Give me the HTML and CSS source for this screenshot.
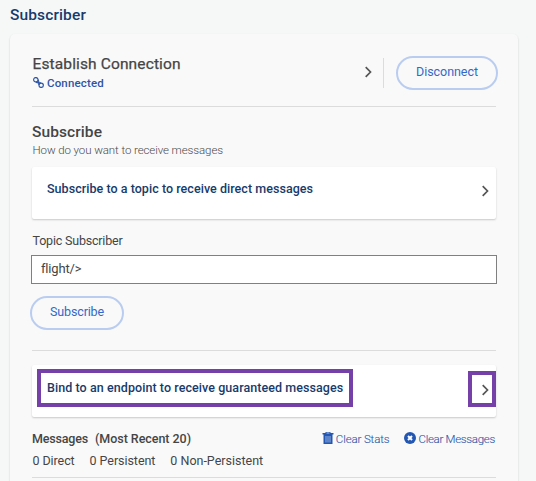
FILE: index.html
```html
<!DOCTYPE html>
<html lang="en">
<head>
<meta charset="utf-8">
<title>Subscriber</title>
<link rel="stylesheet" href="styles.css">
</head>
<body>
<h1 class="page-title">Subscriber</h1>
<main class="panel">
  <header class="connection">
    <div class="connection-info">
      <h2 class="heading establish">Establish Connection</h2>
      <div class="status">
        <svg class="link-icon" viewBox="0 0 12 12"><g fill="none" stroke="currentColor" stroke-width="1.3"><circle cx="3.1" cy="3" r="2.4"/><circle cx="8.9" cy="9" r="2.4"/><path d="M3.2 5.5C5 7 6 6 8.6 6.5M5.5 3C7 5 6 6 6.5 8.6"/></g></svg>
        <span>Connected</span>
      </div>
    </div>
    <svg class="chevron" viewBox="0 0 8 12"><path d="M1.7 1.2 6.5 6 1.7 10.8"/></svg>
    <span class="divider"></span>
    <button class="pill disconnect">Disconnect</button>
  </header>

  <section class="subscribe">
    <h2 class="heading">Subscribe</h2>
    <p class="hint">How do you want to receive messages</p>
    <div class="option">
      <span class="option-label direct">Subscribe to a topic to receive direct messages</span>
      <svg class="chevron" viewBox="0 0 8 12"><path d="M1.7 1.2 6.5 6 1.7 10.8"/></svg>
    </div>
    <label class="field-label" for="topic">Topic Subscriber</label>
    <input class="field" id="topic" value="flight/&gt;">
    <button class="pill submit">Subscribe</button>
  </section>

  <section class="guaranteed">
    <div class="option option-bind">
      <span class="option-label bind">Bind to an endpoint to receive guaranteed messages</span>
      <svg class="chevron" viewBox="0 0 8 12"><path d="M1.7 1.2 6.5 6 1.7 10.8"/></svg>
      <span class="highlight highlight-label"></span>
      <span class="highlight highlight-arrow"></span>
    </div>
    <div class="messages">
      <h3 class="messages-title"><span class="messages-word">Messages</span><span class="recent">(Most Recent 20)</span></h3>
      <a class="action stats"><svg class="trash-icon" viewBox="0 0 12 12"><path fill="currentColor" d="M3.5 0h5v1H11.5v1.6H.5V1h3zM1.5 2.6h9V12h-9z"/><path d="M4 4v6.5M6 4v6.5M8 4v6.5" stroke="#a5bbe2" stroke-width=".9"/><path d="M4.5 1h3" stroke="#f9f9f9" stroke-width=".7"/></svg><span>Clear Stats</span></a>
      <a class="action clear"><svg class="close-icon" viewBox="0 0 12 12"><circle cx="6" cy="6" r="6" fill="currentColor"/><path d="m4 4 4 4m0-4L4 8" stroke="#fff" stroke-width="2"/></svg><span>Clear Messages</span></a>
    </div>
    <div class="counts"><span class="direct-count">0 Direct</span><span class="persistent-count">0 Persistent</span><span class="other-count">0 Non-Persistent</span></div>
  </section>
</main>
</body>
</html>
```
FILE: styles.css
```css
* { box-sizing: border-box; }
body { margin: 0; height: 481px; overflow: hidden; background: #f6f8f8; color: #454545; font-family: Roboto, "Liberation Sans", sans-serif; }
h1, h2, h3, p { margin: 0; }
.page-title { height: 34px; padding: 5px 0 0 10px; font-size: 15.5px; line-height: 20px; font-weight: 500; letter-spacing: .13px; color: #173b6b; }
.panel { width: 508px; height: 470px; margin-left: 10px; padding: 0 22px; background: #f9f9f9; border-radius: 5px; box-shadow: 0 1px 2px rgba(0, 0, 0, .18); }
.connection { display: flex; height: 73px; border-bottom: 1px solid #dcdcdc; }
.connection-info { flex: 1; padding: 20px 0 0 .5px; }
.heading { font-size: 15.5px; line-height: 20px; font-weight: 500; letter-spacing: .09px; }
.establish { font-weight: 400; letter-spacing: .13px; -webkit-text-stroke: .25px currentColor; }
.status { display: flex; height: 18px; gap: 3.5px; align-items: center; font-size: 11.5px; line-height: 18px; font-weight: 500; letter-spacing: .17px; color: #2e54a6; }
.link-icon { width: 11px; height: 11px; margin-top: -2px; }
.chevron { width: 8px; height: 12px; fill: none; stroke: #555; stroke-width: 1.7; flex: none; }
.connection .chevron { margin: 32px 11px 0 0; }
.divider { width: 1px; height: 30px; margin: 24px 12px 0 0; background: #dcdcdc; }
.pill { display: block; height: 34px; padding: 0 0 2px; border: 2px solid #bacdf0; border-radius: 17px; background: transparent; color: #3268c9; font: 12.5px/16px Roboto, "Liberation Sans", sans-serif; }
.disconnect { width: 102px; margin: 22px -2px 0 0; letter-spacing: -.04px; }
.subscribe { height: 244px; padding-top: 15px; border-bottom: 1px solid #dcdcdc; }
.hint { height: 25px; padding-left: .5px; font-size: 11.5px; line-height: 16px; font-weight: 300; letter-spacing: -.09px; color: #4a4a4a; }
.option { position: relative; display: flex; width: 464px; height: 52px; padding: 0 7px 0 15px; justify-content: space-between; align-items: flex-start; background: #fff; border-radius: 2px; box-shadow: 0 1px 2px rgba(0, 0, 0, .2); }
.option .chevron { margin-top: 18px; }
.option-bind { padding-top: 1px; }
.option-label { padding-top: 14px; font-size: 12.5px; line-height: 16px; font-weight: 500; color: #173b6b; }
.direct { letter-spacing: .045px; }
.bind { letter-spacing: .07px; }
.field-label { display: block; height: 36px; padding: 14px 0 0 .5px; font-size: 12.5px; line-height: 16px; letter-spacing: -.2px; }
.field { display: block; width: 466px; height: 29px; margin-left: -1px; padding: 0 9px 3px; border: 1px solid #808080; border-radius: 0; background: #fff; color: #454545; font: 13px/16px Roboto, "Liberation Sans", sans-serif; letter-spacing: -.18px; }
.submit { width: 94px; margin: 12px 0 0 -2px; letter-spacing: -.14px; }
.guaranteed { height: 127px; padding-top: 14px; border-bottom: 1px solid #dcdcdc; }
.highlight { position: absolute; border: 4px solid #7541a8; }
.highlight-label { left: 5px; top: 4px; width: 316px; height: 38px; }
.highlight-arrow { right: 0; top: 6px; width: 28px; height: 36px; }
.messages { display: flex; height: 20px; margin-top: 12px; align-items: center; }
.messages-title { display: flex; flex: 1; gap: 7px; font-size: 12.5px; line-height: 20px; font-weight: 500; }
.messages-word { letter-spacing: -.18px; }
.recent { letter-spacing: -.04px; }
.action { display: flex; align-items: center; color: #2e54a6; font-size: 11.5px; line-height: 20px; font-weight: 300; -webkit-text-stroke: .1px currentColor; }
.stats { gap: 2px; margin-right: 15px; letter-spacing: -.13px; }
.clear { gap: 2px; margin-right: 1px; letter-spacing: -.3px; }
.trash-icon, .close-icon { width: 12px; height: 12px; flex: none; margin-top: -2px; color: #2457b2; }
.counts { display: flex; gap: 15px; padding: 4px 0 0 .5px; font-size: 12.5px; line-height: 16px; }
.direct-count { letter-spacing: -.08px; }
.persistent-count { letter-spacing: -.06px; }
.other-count { letter-spacing: 0; }
```
